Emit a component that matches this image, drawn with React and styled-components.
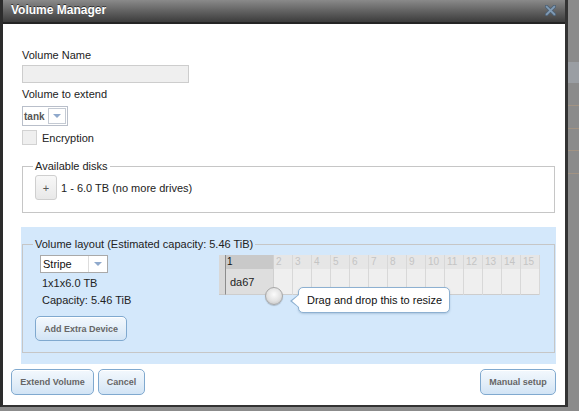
import React from "react";
import styled, { createGlobalStyle } from "styled-components";

const GlobalStyle = createGlobalStyle`
  html, body { margin: 0; padding: 0; }
  body {
    font-family: "Liberation Sans", Arial, Helvetica, sans-serif;
    font-size: 11px;
    color: #222;
    background: #8c8c8c;
  }
  * { box-sizing: border-box; }
`;

const Screen = styled.div`
  display: flex;
  align-items: flex-start;
  width: 579px;
  height: 411px;
  overflow: hidden;
  background: #8c8c8c;
`;

const Dialog = styled.div`
  flex: 0 0 568px;
  height: 407px;
  display: flex;
  flex-direction: column;
  background: #fff;
  border-left: 3px solid #2c2c2c;
  border-right: 3px solid #333;
  border-bottom: 2px solid #333;
`;

const BackdropStrip = styled.div`
  flex: 1;
  height: 411px;
  background:
    linear-gradient(to bottom,
      transparent 62px, #9a9ea3 62px, #9a9ea3 83px, transparent 83px,
      transparent 105px, #a29383 105px, #a29383 106px, transparent 106px,
      transparent 128px, #a29383 128px, #a29383 129px, transparent 129px,
      transparent 150px, #a29383 150px, #a29383 151px, transparent 151px,
      transparent 173px, #a29383 173px, #a29383 174px, transparent 174px),
    #8b8b8b;
`;

const TitleBar = styled.div`
  height: 24px;
  flex: 0 0 24px;
  display: flex;
  align-items: center;
  justify-content: space-between;
  padding: 0 9px 2px 8px;
  background: linear-gradient(to bottom, #8a8a8a 0%, #666 45%, #3c3c3c 100%);
  border-bottom: 2px solid #242424;
`;

const Title = styled.span`
  color: #fff;
  font-weight: bold;
  font-size: 12px;
  text-shadow: 0 -1px 0 #333;
`;

const CloseButton = styled.span`
  display: flex;
  width: 11px;
  height: 11px;
  margin-top: 1px;
`;

const Body = styled.div`
  padding: 24px 10px 0 19px;
  display: flex;
  flex-direction: column;
  align-items: flex-start;
`;

const Label = styled.div`
  line-height: 14px;
  margin-top: ${(p) => p.$gap || 0}px;
`;

const TextInput = styled.div`
  margin-top: 3px;
  width: 167px;
  height: 18px;
  background: #efefef;
  border: 1px solid #cdcdcd;
`;

const SelectBox = styled.div`
  display: flex;
  align-items: stretch;
  margin-top: ${(p) => p.$gap || 0}px;
  margin-left: ${(p) => p.$indent || 0}px;
  width: ${(p) => p.$w}px;
  height: ${(p) => p.$h}px;
  background: #fff;
  border: 1px solid ${(p) => (p.$compact ? "#b9bfca" : "#a9a9a9")};
`;

const SelectValue = styled.span`
  flex: 1;
  display: flex;
  align-items: center;
  padding-left: ${(p) => (p.$compact ? 1 : 2)}px;
  font-size: ${(p) => (p.$compact ? 10 : 11)}px;
  font-weight: ${(p) => (p.$compact ? "bold" : "normal")};
  color: ${(p) => (p.$compact ? "#555" : "#111")};
`;

const SelectArrow = styled.span`
  flex: 0 0 ${(p) => p.$w}px;
  display: flex;
  align-items: center;
  justify-content: center;
  border: 1px solid #c4cad3;
  margin: ${(p) => (p.$compact ? "1px 1px 1px 0" : "0")};
  border-width: ${(p) => (p.$compact ? "1px" : "0 0 0 1px")};
  border-color: ${(p) => (p.$compact ? "#c4cad3" : "#ddd")};
  background: #fff;
  &::after {
    content: "";
    border-left: 4px solid transparent;
    border-right: 4px solid transparent;
    border-top: 4px solid #8fa9cc;
  }
`;

const CheckRow = styled.div`
  display: flex;
  align-items: center;
  gap: 5px;
  margin-top: 4px;
  height: 15px;
`;

const CheckBox = styled.span`
  width: 15px;
  height: 15px;
  background: #efefef;
  border: 1px solid #d2d2d2;
`;

const Fieldset = styled.fieldset`
  align-self: stretch;
  margin: ${(p) => p.$gap || 0}px 0 0;
  padding: 0 10px ${(p) => p.$bottom}px;
  border: 1px solid #c6c6c6;
  min-width: 0;
`;

const Legend = styled.legend`
  padding: 0 2px;
  line-height: 14px;
  font-size: 11px;
  color: #222;
`;

const DiskRow = styled.div`
  display: flex;
  align-items: center;
  gap: 4px;
  margin: 2px 0 0 2px;
`;

const AddDiskButton = styled.span`
  width: 22px;
  height: 25px;
  display: flex;
  align-items: center;
  justify-content: center;
  border: 1px solid #cfcfcf;
  border-radius: 3px;
  background: linear-gradient(to bottom, #f8f8f8, #e8e8e8);
  color: #555;
  font-size: 11px;
`;

const LayoutPanel = styled.div`
  align-self: stretch;
  margin: 14px -1px 0;
  padding: 10px 1px 11px;
  background: #d4e8fb;
  display: flex;
  flex-direction: column;
`;

const LayoutRow = styled.div`
  display: flex;
  align-items: flex-start;
  margin-top: 4px;
`;

const LayoutControls = styled.div`
  flex: 0 0 186px;
  display: flex;
  flex-direction: column;
  align-items: flex-start;
`;

const InfoText = styled.div`
  line-height: 14px;
  margin: 3px 0 0 9px;
`;

const Button = styled.button`
  height: ${(p) => p.$h || 26}px;
  width: ${(p) => p.$w}px;
  margin: ${(p) => p.$margin || 0};
  padding: 0;
  border: 1px solid #80a9cf;
  border-radius: 5px;
  background: linear-gradient(to bottom, #f3f8fd 0%, #e4eff9 50%, #d2e4f5 100%);
  box-shadow: inset 0 1px 0 #fff;
  font-family: "Liberation Sans", Arial, sans-serif;
  font-size: 9px;
  font-weight: bold;
  color: #666;
  cursor: pointer;
`;

const GridWrap = styled.div`
  position: relative;
  display: flex;
`;

const GridHandle = styled.div`
  width: 7px;
  height: 40px;
  background: #d8d8d8;
  border-right: 1px solid #8c8c8c;
  border-bottom: 1px solid #c8c8c8;
`;

const GridColumn = styled.div`
  width: ${(p) => p.$w}px;
  display: flex;
  flex-direction: column;
  border-right: 1px solid ${(p) => (p.$used ? "#d0d0d0" : "#d8d8d8")};
`;

const HeadCell = styled.div`
  height: 14px;
  line-height: 14px;
  padding-left: ${(p) => (p.$used ? 1 : 2)}px;
  font-size: 10px;
  background: ${(p) => (p.$used ? "#c9c9c9" : "#e6e6e6")};
  color: ${(p) => (p.$used ? "#111" : "#c4c4c4")};
`;

const BodyCell = styled.div`
  height: 26px;
  display: flex;
  align-items: center;
  padding-left: 4px;
  font-size: 11px;
  background: ${(p) => (p.$used ? "#dedede" : "#efefef")};
  border-bottom: 1px solid #cdcdcd;
`;

const Knob = styled.div`
  position: absolute;
  left: 46px;
  top: 32px;
  width: 18px;
  height: 18px;
  border-radius: 50%;
  border: 1px solid #a8a8a8;
  background: radial-gradient(circle at 50% 40%, #fbfbfb 0%, #e2e2e2 55%, #b9b9b9 100%);
  box-shadow: 0 1px 1px rgba(0, 0, 0, 0.2);
`;

const Tooltip = styled.div`
  position: absolute;
  left: 79px;
  top: 32px;
  width: 152px;
  height: 26px;
  display: flex;
  align-items: center;
  padding-left: 8px;
  background: #fff;
  border: 1px solid #8db0d1;
  border-radius: 5px;
  box-shadow: 0 1px 2px rgba(60, 100, 140, 0.25);
  white-space: nowrap;
  color: #111;
  &::before, &::after {
    content: "";
    position: absolute;
    top: 6px;
    border-top: 7px solid transparent;
    border-bottom: 7px solid transparent;
  }
  &::before {
    left: -9px;
    border-right: 9px solid #8db0d1;
  }
  &::after {
    left: -7px;
    border-right: 8px solid #fff;
  }
`;

const Footer = styled.div`
  display: flex;
  justify-content: space-between;
  padding: 5px 9px 0 8px;
`;

const ButtonGroup = styled.div`
  display: flex;
  gap: 4px;
`;

const CloseIcon = () => (
  <svg width="11" height="11" viewBox="0 0 11 11">
    <path d="M1.5 1.5 L9.5 9.5 M9.5 1.5 L1.5 9.5" stroke="#4f6275" strokeWidth="3.6" strokeLinecap="square" />
    <path d="M1.8 1.8 L9.2 9.2 M9.2 1.8 L1.8 9.2" stroke="#819cb6" strokeWidth="1.8" strokeLinecap="square" />
  </svg>
);

const slots = Array.from({ length: 14 }, (_, i) => i + 2);

export default function App() {
  return (
    <>
      <GlobalStyle />
      <Screen>
        <Dialog>
          <TitleBar>
            <Title>Volume Manager</Title>
            <CloseButton>
              <CloseIcon />
            </CloseButton>
          </TitleBar>
          <Body>
            <Label>Volume Name</Label>
            <TextInput />
            <Label $gap={4}>Volume to extend</Label>
            <SelectBox $compact $gap={5} $w={46} $h={20}>
              <SelectValue $compact>tank</SelectValue>
              <SelectArrow $compact $w={18} />
            </SelectBox>
            <CheckRow>
              <CheckBox />
              <span>Encryption</span>
            </CheckRow>
            <Fieldset $gap={14} $bottom={12}>
              <Legend>Available disks</Legend>
              <DiskRow>
                <AddDiskButton>+</AddDiskButton>
                <span>1 - 6.0 TB (no more drives)</span>
              </DiskRow>
            </Fieldset>
            <LayoutPanel>
              <Fieldset $bottom={11}>
                <Legend>Volume layout (Estimated capacity: 5.46 TiB)</Legend>
                <LayoutRow>
                  <LayoutControls>
                    <SelectBox $indent={7} $w={68} $h={18}>
                      <SelectValue>Stripe</SelectValue>
                      <SelectArrow $w={19} />
                    </SelectBox>
                    <InfoText>1x1x6.0 TB</InfoText>
                    <InfoText>Capacity: 5.46 TiB</InfoText>
                    <Button $w={92} $h={25} $margin="9px 0 0 2px">Add Extra Device</Button>
                  </LayoutControls>
                  <GridWrap>
                    <GridHandle />
                    <GridColumn $w={48} $used>
                      <HeadCell $used>1</HeadCell>
                      <BodyCell $used>da67</BodyCell>
                    </GridColumn>
                    {slots.map((n) => (
                      <GridColumn key={n} $w={19}>
                        <HeadCell>{n}</HeadCell>
                        <BodyCell />
                      </GridColumn>
                    ))}
                    <Knob />
                    <Tooltip>Drag and drop this to resize</Tooltip>
                  </GridWrap>
                </LayoutRow>
              </Fieldset>
            </LayoutPanel>
          </Body>
          <Footer>
            <ButtonGroup>
              <Button $w={83}>Extend Volume</Button>
              <Button $w={47}>Cancel</Button>
            </ButtonGroup>
            <Button $w={76}>Manual setup</Button>
          </Footer>
        </Dialog>
        <BackdropStrip />
      </Screen>
    </>
  );
}
